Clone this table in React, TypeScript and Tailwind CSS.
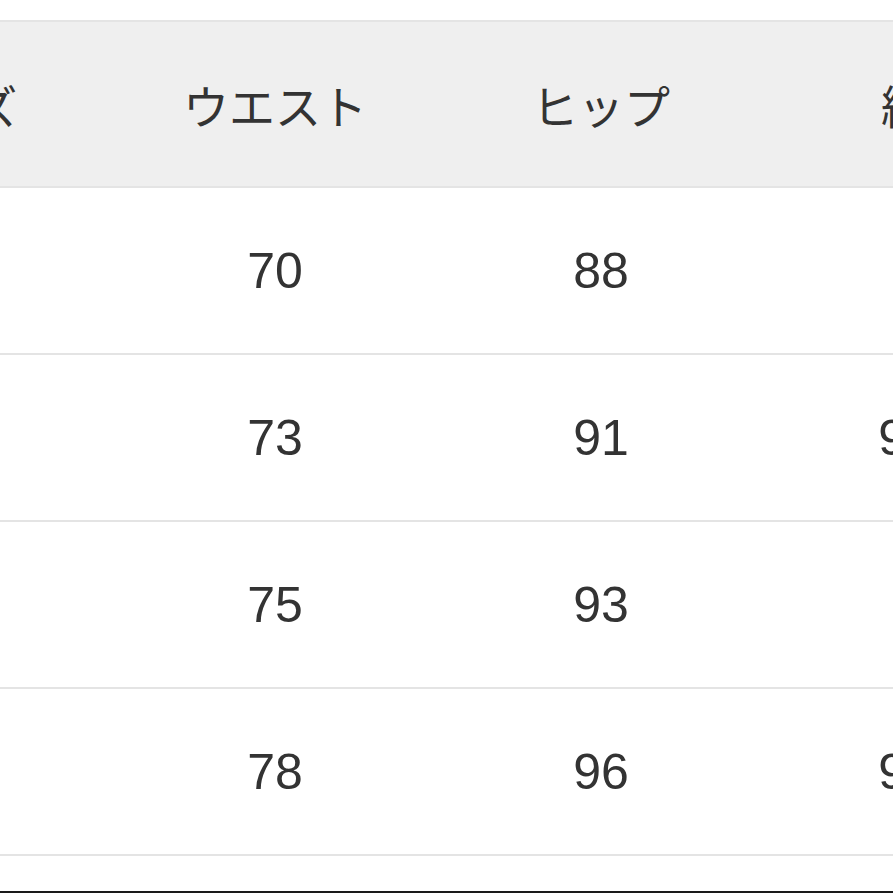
const HEADERS = ["サイズ", "ウエスト", "ヒップ", "総丈"];

const ROWS = [
  ["S", "70", "88", "92"],
  ["M", "73", "91", "94.5"],
  ["L", "75", "93", "97"],
  ["XL", "78", "96", "99.5"],
];

export default function App() {
  return (
    <div className="relative h-[893px] w-[893px] overflow-hidden bg-white text-[#333]">
      <div className="pt-[20px]">
        <div className="ml-[-214px] w-[1304px]">
          {/* header */}
          <div className="flex h-[168px] items-center border-y-2 border-[#e4e4e4] bg-[#efefef]">
            {HEADERS.map((h) => (
              <div
                key={h}
                className="w-[326px] text-center text-[46px] leading-none"
                style={{ fontFamily: '"Noto Sans CJK JP", "Noto Sans", sans-serif' }}
              >
                {h}
              </div>
            ))}
          </div>

          {/* rows */}
          {ROWS.map((row) => (
            <div key={row[0]} className="flex h-[167px] items-center border-b-2 border-[#e4e4e4]">
              {row.map((cell, i) => (
                <div
                  key={i}
                  className="w-[326px] text-center text-[50px] leading-none"
                  style={{ fontFamily: '"Liberation Sans", Arial, sans-serif' }}
                >
                  {cell}
                </div>
              ))}
            </div>
          ))}
        </div>
      </div>
      <div className="absolute bottom-0 left-0 h-[2px] w-full bg-[#1a1a1a]" />
    </div>
  );
}
